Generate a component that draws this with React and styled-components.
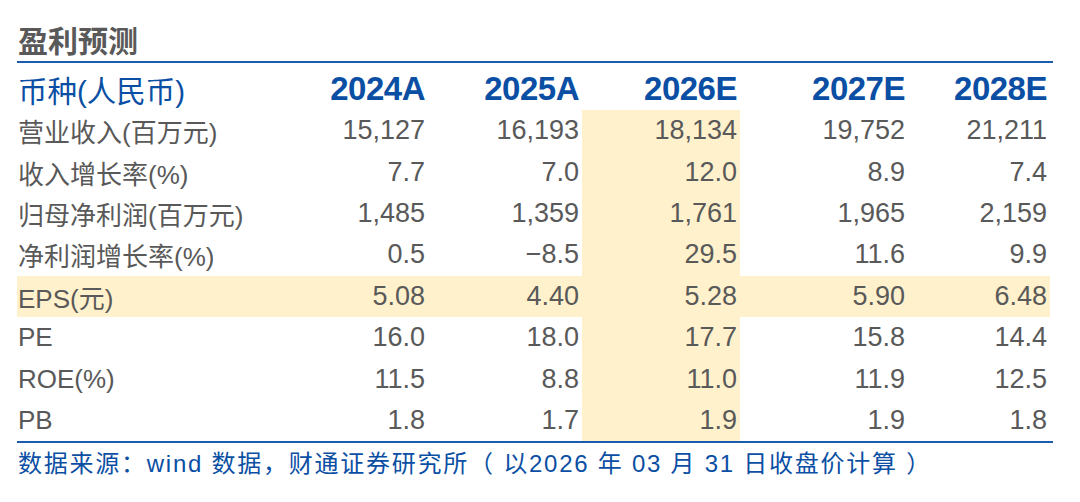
import React from 'react';
import styled, { createGlobalStyle } from 'styled-components';

const GlobalStyle = createGlobalStyle`
  body {
    margin: 0;
    background: #fff;
    font-family: 'Liberation Sans', 'Noto Sans CJK SC', sans-serif;
  }
`;

const columns = ['2024A', '2025A', '2026E', '2027E', '2028E'];
const focusCol = 2;

const rows = [
  { label: '营业收入(百万元)', values: ['15,127', '16,193', '18,134', '19,752', '21,211'] },
  { label: '收入增长率(%)', values: ['7.7', '7.0', '12.0', '8.9', '7.4'] },
  { label: '归母净利润(百万元)', values: ['1,485', '1,359', '1,761', '1,965', '2,159'] },
  { label: '净利润增长率(%)', values: ['0.5', '−8.5', '29.5', '11.6', '9.9'] },
  { label: 'EPS(元)', values: ['5.08', '4.40', '5.28', '5.90', '6.48'], highlight: true },
  { label: 'PE', values: ['16.0', '18.0', '17.7', '15.8', '14.4'] },
  { label: 'ROE(%)', values: ['11.5', '8.8', '11.0', '11.9', '12.5'] },
  { label: 'PB', values: ['1.8', '1.7', '1.9', '1.9', '1.8'] },
];

const Page = styled.div`
  padding: 17px 0 0 17px;
  width: 1036px;
`;

const Title = styled.h2`
  margin: 0;
  font-family: 'Noto Sans CJK SC', sans-serif;
  font-size: 30px;
  line-height: 44px;
  font-weight: 700;
  color: #595959;
  padding-left: 1px;
`;

const Table = styled.div`
  border-top: 2px solid #1b5cb0;
  border-bottom: 2px solid #1b5cb0;
`;

const Row = styled.div`
  display: grid;
  grid-template-columns: 255px 156px 154px 158px 168px 142px;
  width: 1033px;
  height: ${(p) => (p.$head ? '47px' : '41.4px')};
  align-items: stretch;
  background: ${(p) => (p.$highlight ? '#fff1cc' : 'transparent')};
`;

const Cell = styled.div`
  display: flex;
  align-items: center;
  justify-content: ${(p) => (p.$label ? 'flex-start' : 'flex-end')};
  padding: ${(p) => (p.$label ? '0 0 0 1px' : '0 3px 0 0')};
  background: ${(p) => (p.$focus ? '#fff1cc' : 'transparent')};
  color: #595959;
  font-size: 27px;
  white-space: nowrap;
`;

const LabelText = styled.span`
  font-size: 26px;
`;

const HeadCell = styled(Cell)`
  color: #0b4fa4;
  font-size: ${(p) => (p.$label ? '29.5px' : '33px')};
  font-weight: ${(p) => (p.$label ? 400 : 700)};
  padding-top: 4px;
  letter-spacing: ${(p) => (p.$label ? '0' : '-0.5px')};
`;

const Source = styled.p`
  margin: 0;
  padding: 5px 0 0 1px;
  color: #0b4fa4;
  font-size: 24px;
  line-height: 32px;
  letter-spacing: 1.75px;
  white-space: nowrap;
`;

export default function App() {
  return (
    <>
      <GlobalStyle />
      <Page>
        <Title>盈利预测</Title>
        <Table>
          <Row $head>
            <HeadCell $label>币种(人民币)</HeadCell>
            {columns.map((c) => (
              <HeadCell key={c}>{c}</HeadCell>
            ))}
          </Row>
          {rows.map((r) => (
            <Row key={r.label} $highlight={r.highlight}>
              <Cell $label>
                <LabelText>{r.label}</LabelText>
              </Cell>
              {r.values.map((v, i) => (
                <Cell key={i} $focus={i === focusCol}>
                  {v}
                </Cell>
              ))}
            </Row>
          ))}
        </Table>
        <Source>
          数据来源：wind 数据，财通证券研究所（ 以2026 年 03 月 31 日收盘价计算 ）
        </Source>
      </Page>
    </>
  );
}
